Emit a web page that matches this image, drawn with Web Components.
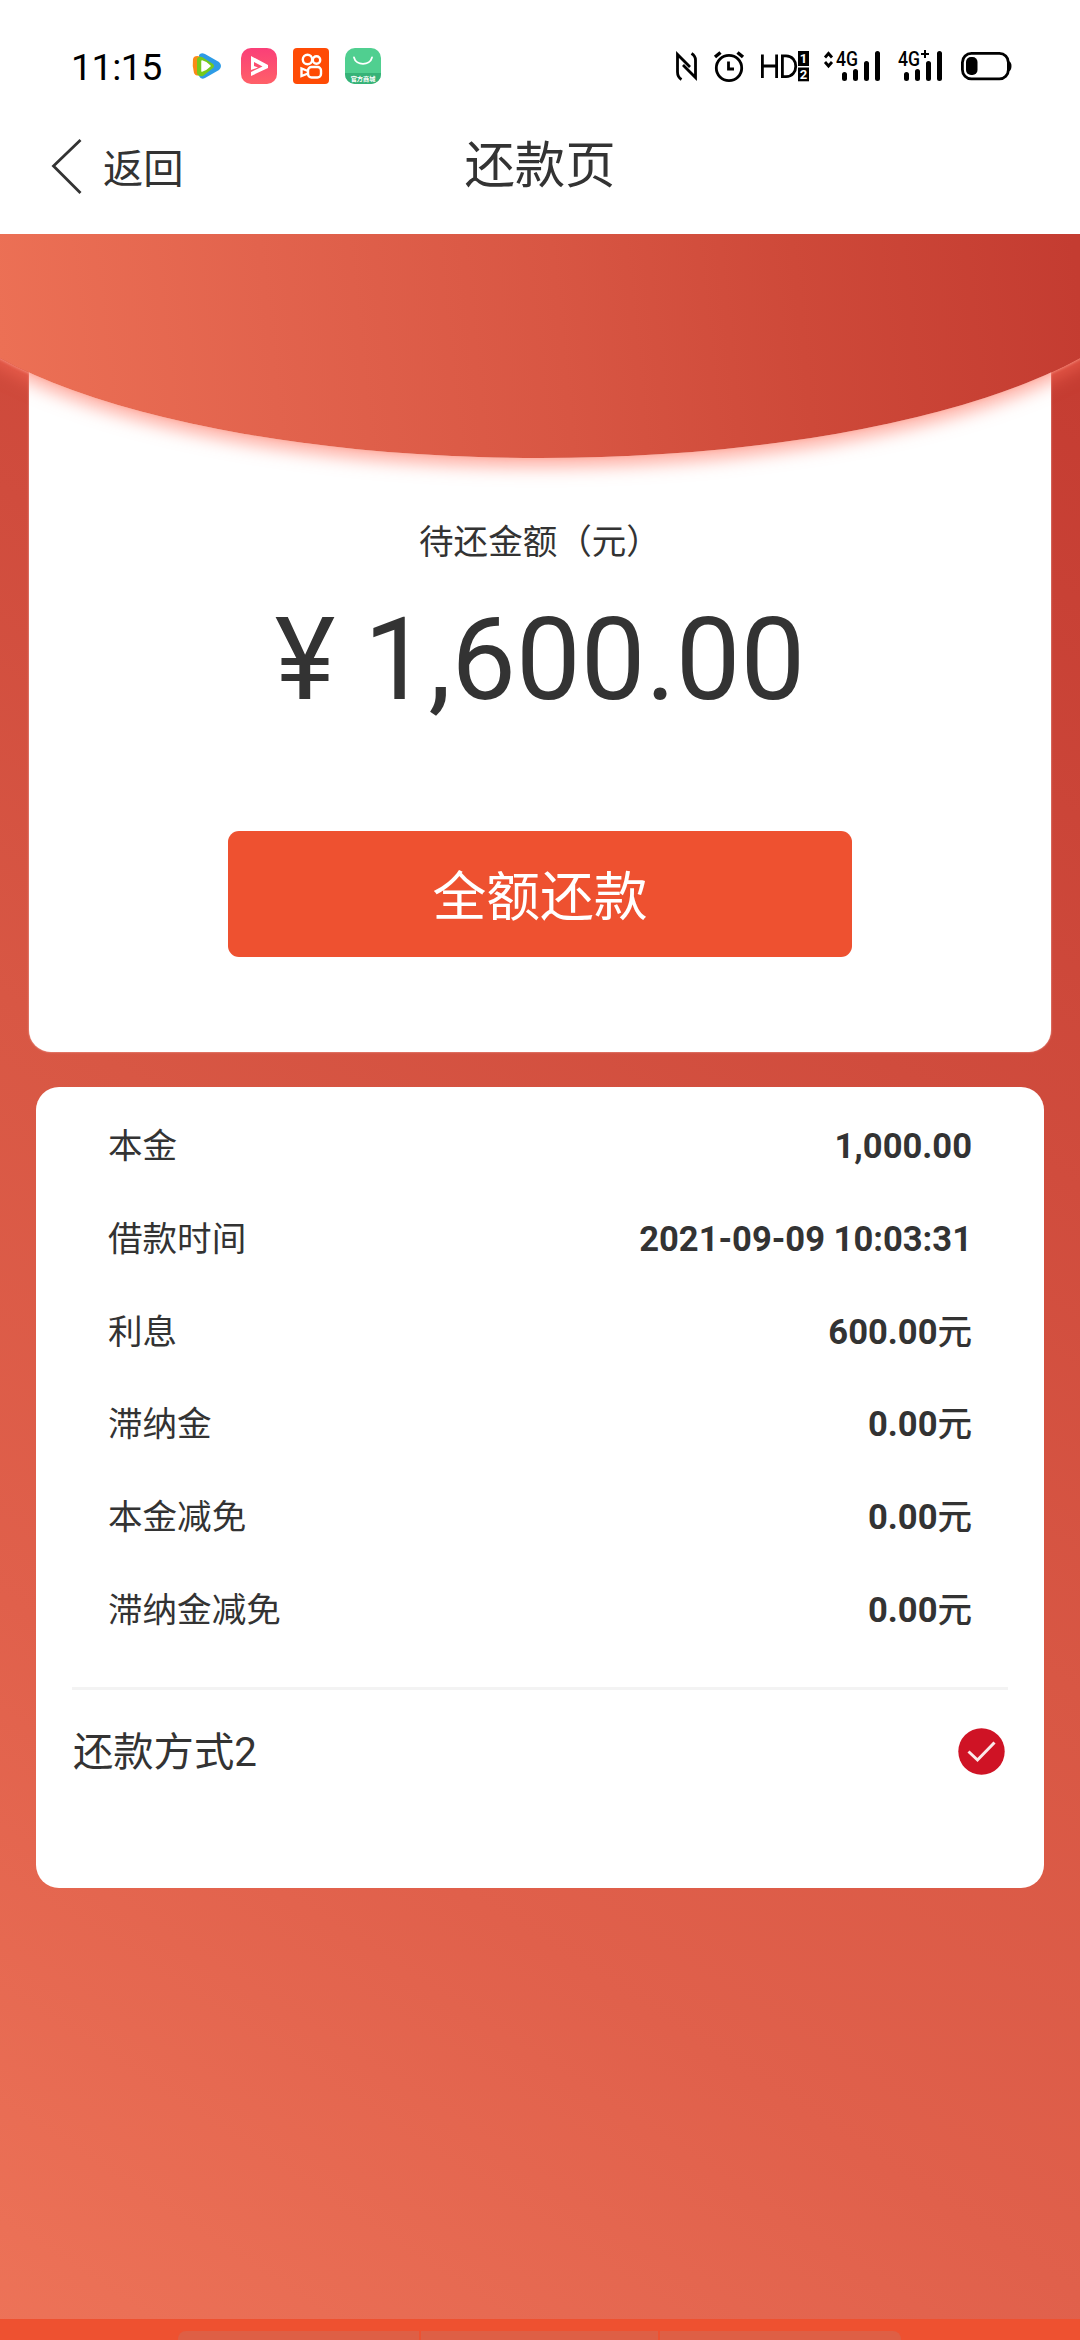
<!DOCTYPE html>
<html lang="zh-CN">
<head>
<meta charset="utf-8">
<title>还款页</title>
<style>
body{margin:0;width:1080px;height:2340px;overflow:hidden;background:#fff;color:#333;font-family:Roboto,"Noto Sans CJK SC",sans-serif}
</style>
</head>
<body>
<repay-app></repay-app>
<script>
const define=(name,html)=>customElements.define(name,class extends HTMLElement{
  constructor(){
    super();
    this.attachShadow({mode:'open'}).innerHTML=html;
  }
});

define('status-bar',`
<style>
:host{display:flex;align-items:center;height:132px;padding:0 66px 0 71px;box-sizing:border-box;color:#000}
.time{font-size:37.500px;letter-spacing:-.5px;line-height:44px;width:121px;margin-top:1px;white-space:nowrap}
.apps{display:flex;gap:16px;align-items:center;flex:1}
.sys{display:flex;align-items:center}
svg{display:block;flex:none}
text{font-family:Roboto,"Noto Sans CJK SC",sans-serif}
</style>
<div class="time">11:15</div>
<div class="apps">
 <svg width="33" height="36" viewBox="0 0 33 36">
  <path d="M7 7Q9 4 13 6L27 14Q31 18 27 22L13 30Q9 32 7 28Z" fill="#2d9be6"/>
  <path d="M1 11Q2 7 8 8.500V27.500Q3 28 2 25Q0 18 1 11Z" fill="#fb8a16"/>
  <path d="M5 11Q6 8 10 9L21 16Q23 18 21 20L11 28Q6 29 5 25Z" fill="#75c91c"/>
  <path d="M10 13Q14 14 18 18Q14 22 10 23Z" fill="#fff" stroke="#fff" stroke-width="1.500" stroke-linejoin="round"/>
 </svg>
 <svg width="36" height="36" viewBox="0 0 36 36">
  <defs><linearGradient id="p" x1="0" y1="0" x2="0" y2="1"><stop offset="0" stop-color="#fa3f78"/><stop offset="1" stop-color="#ff6068"/></linearGradient></defs>
  <rect width="36" height="36" rx="10" fill="url(#p)"/>
  <path d="M10 8L27 17V20L10 28V24L21.500 18.500L13 14V18L17 19.500L10 22Z" fill="#fff"/>
 </svg>
 <svg width="36" height="36" viewBox="0 0 36 36">
  <rect width="36" height="36" rx="4" fill="#ff4b05"/>
  <g fill="none" stroke="#fff" stroke-width="2.400"><circle cx="14.500" cy="11.500" r="4.700"/><circle cx="23.500" cy="12" r="3.700"/><rect x="15" y="19" width="13" height="10.500" rx="3.500"/><path d="M15 23L8.500 20.500V28L15 25.500"/></g>
 </svg>
 <svg width="36" height="36" viewBox="0 0 36 36">
  <defs><clipPath id="g"><rect width="36" height="36" rx="10"/></clipPath></defs>
  <g clip-path="url(#g)"><rect width="36" height="36" fill="#50cf90"/><rect y="25" width="36" height="11" fill="#36b277"/></g>
  <path d="M9 9.500C11 18 25 18 27 9.500" fill="none" stroke="#fff" stroke-width="1.800" stroke-linecap="round"/>
  <text x="18" y="32.500" text-anchor="middle" font-size="6.200" font-weight="700" fill="#fff">官方商城</text>
 </svg>
</div>
<div class="sys">
 <svg width="338" height="36" viewBox="676 48 338 36">
  <g fill="none" stroke="#000" stroke-width="2.800">
   <path d="M681.500 79.500Q677.500 77 677.500 72V54.500L690 67M683 65L695.500 77.500V60Q695.500 56 691.500 53.500"/>
   <circle cx="729" cy="68" r="12.700"/><path d="M728.500 61.500V69H734"/>
   <path d="M715 57L720.500 52.500M743 57L737.500 52.500" stroke-width="3.500"/>
   <path d="M762.400 54.500V78M776.600 54.500V78M762.400 66H776.600M782.400 55.800H786C799 55.800 799 76.600 786 76.600H782.400Z"/>
  </g>
  <rect x="798" y="51" width="11" height="15"/><rect x="798" y="67.500" width="11" height="13.800"/>
  <text x="803.500" y="63" font-size="13" font-weight="700" fill="#fff" text-anchor="middle">1</text>
  <text x="803.500" y="79" font-size="13" font-weight="700" fill="#fff" text-anchor="middle">2</text>
  <path d="M825 57.500L828.500 53.500L832 57.500M825 62L828.500 66L832 62" fill="none" stroke="#000" stroke-width="2.800"/>
  <g font-size="19.500" font-weight="500"><text x="836" y="66" textLength="22" lengthAdjust="spacingAndGlyphs">4G</text><text x="898" y="66" textLength="22" lengthAdjust="spacingAndGlyphs">4G</text></g>
  <path d="M921 54H929M925 50V58" stroke="#000" stroke-width="2"/>
  <g stroke="#000" stroke-width="5" stroke-linecap="round"><path d="M844.500 74.500V78.500M855.500 71.500V78.500M866.500 63.500V78.500M877.500 53.500V78.500M906.500 74.500V78.500M917.500 71.500V78.500M928.500 63.500V78.500M939.500 53.500V78.500"/></g>
  <rect x="962.400" y="53.400" width="46" height="25.400" rx="9" fill="none" stroke="#000" stroke-width="2.800"/>
  <rect x="966" y="57" width="11.500" height="18" rx="5"/>
  <path d="M1008 61Q1011.500 61.500 1011.500 66Q1011.500 71 1008 71.500Z"/>
 </svg>
</div>`);

define('nav-bar',`
<style>
:host{display:grid;grid-template-columns:1fr auto 1fr;height:102px;color:#333}
.back{display:flex;padding-left:50px;align-items:flex-start}
svg{margin-top:5px;display:block;flex:none}
.label{font-size:40.300px;line-height:60px;margin:8px 0 0 19px}
.title{font-size:50.400px;line-height:74px;margin-top:-3px}
</style>
<div class="back">
 <svg width="34" height="58" viewBox="0 0 34 58"><path d="M30.500 3L3.500 29L30.500 56" fill="none" stroke="#333" stroke-width="2.800"/></svg>
 <div class="label"><slot name="back"></slot></div>
</div>
<div class="title"><slot></slot></div><div></div>`);

define('amount-card',`
<style>
:host{display:flex;flex-direction:column;align-items:center;box-sizing:border-box;width:1022px;height:718px;margin:100px auto 0;padding-top:183px;background:#fff;border-radius:0 0 22px 22px;box-shadow:0 0 2px rgba(255,220,214,.8)}
.cap{font-size:34.560px;line-height:50px}
.sum{font-size:115.200px;line-height:136px;margin-top:25px;white-space:pre}
button{all:unset;box-sizing:border-box;width:624px;height:126px;padding-top:4px;line-height:122px;text-align:center;margin-top:103px;border-radius:11px;background:#ee5130;color:#fff;font-size:53.800px}
button span{display:block;margin-top:2px}
</style>
<div class="cap"><slot name="caption"></slot></div>
<div class="sum"><slot name="sum"></slot></div>
<button><span><slot name="action"></slot></span></button>`);

define('detail-row',`
<style>
:host{display:flex;justify-content:space-between;align-items:center;height:92.800px;padding:0 72px;font-size:34.560px;line-height:50px}
b{font-weight:700}
</style>
<span><slot></slot></span><b><slot name="value"></slot></b>`);

define('pay-method',`
<style>
:host{display:flex;justify-content:space-between;align-items:center;margin:31px 36px 0;padding:0 3px 0 0;border-top:3px solid #f3f3f3;height:122px;font-size:40.300px;color:#333}
svg{display:block}
span{margin:-5px 0 0 1px}
</style>
<span><slot></slot></span>
<svg width="47" height="47" viewBox="0 0 47 47"><circle cx="23.500" cy="23.500" r="23.200" fill="#cf1325"/><path d="M10.500 23.500L19.500 32L36.500 14.500" fill="none" stroke="#fbe9ea" stroke-width="3"/></svg>`);

define('detail-card',`
<style>
:host{display:block;box-sizing:border-box;width:1008px;height:801px;margin:35px auto 0;padding-top:12.600px;background:#fff;border-radius:23px}
</style><slot></slot>`);

define('bottom-bar',`
<style>
:host{display:block;height:21px;background:#ee5130;overflow:hidden;padding:0 179px 0 178px}
.keys{display:grid;grid-template-columns:241px 237px 241px;gap:2px;height:40px;margin-top:12px;border-radius:8px;overflow:hidden}
i{background:#de5f45}
</style><div class="keys"><i></i><i></i><i></i></div>`);

define('repay-scene',`
<style>
:host{display:flex;flex-direction:column;position:relative;height:2106px;overflow:hidden;background:linear-gradient(213deg,#c33a30 0,#d04c3d 34%,#d85744 52%,#e0604b 73.500%,#ed7358 100%)}
.arch{position:absolute;left:-90px;top:-188px;width:1260px;height:412px;border-radius:50%;background:linear-gradient(84deg,#ec7055 100px,#e2634d 370px,#d85643 660px,#ce4939 900px,#c43c31 1180px);box-shadow:0 1px 3px rgba(255,170,155,.6),0 9px 17px rgba(255,110,90,.55)}
.end{margin-top:auto}
</style>
<slot></slot><div class="arch"></div><div class="end"><slot name="end"></slot></div>`);

define('repay-app',`
<style>:host{display:block;width:1080px;height:2340px}.y{font-weight:500}</style>
<status-bar></status-bar>
<nav-bar><span slot="back">返回</span>还款页</nav-bar>
<repay-scene>
 <amount-card><span slot="caption">待还金额（元）</span><span slot="sum">¥ 1,600.00</span><span slot="action">全额还款</span></amount-card>
 <detail-card>
  <detail-row>本金<span slot="value">1,000.00</span></detail-row>
  <detail-row>借款时间<span slot="value">2021-09-09 10:03:31</span></detail-row>
  <detail-row>利息<span slot="value">600.00<span class="y">元</span></span></detail-row>
  <detail-row>滞纳金<span slot="value">0.00<span class="y">元</span></span></detail-row>
  <detail-row>本金减免<span slot="value">0.00<span class="y">元</span></span></detail-row>
  <detail-row>滞纳金减免<span slot="value">0.00<span class="y">元</span></span></detail-row>
  <pay-method>还款方式2</pay-method>
 </detail-card>
 <bottom-bar slot="end"></bottom-bar>
</repay-scene>`);
</script>
</body>
</html>
